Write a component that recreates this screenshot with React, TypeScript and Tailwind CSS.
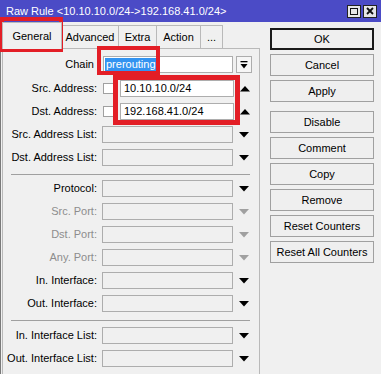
import React from 'react';

const DownArrow = ({ disabled = false }: { disabled?: boolean }) => (
  <svg width="10" height="6" viewBox="0 0 10 6" className="block">
    <polygon points="0,0 10,0 5,5.5" fill={disabled ? '#a0a0a0' : '#000'} />
  </svg>
);

const UpArrow = () => (
  <svg width="10" height="6" viewBox="0 0 10 6" className="block">
    <polygon points="0,5.5 10,5.5 5,0" fill="#000" />
  </svg>
);

function Label({ text, disabled = false, colon = true }: { text: string; disabled?: boolean; colon?: boolean }) {
  return (
    <div
      className={`w-[94px] shrink-0 text-right leading-none whitespace-nowrap ${colon ? '' : 'pr-[3px]'} ${
        disabled ? 'text-[#8d8d8d]' : 'text-black'
      }`}
    >
      {text}
      {colon ? ':' : ''}
    </div>
  );
}

function ListRow({ label, disabled = false }: { label: string; disabled?: boolean }) {
  return (
    <div className="flex items-center h-[17px]">
      <Label text={label} disabled={disabled} />
      <div className="ml-[5px] w-[131px] h-[17px] border border-[#adadad] bg-[#f0f0f0]" />
      <div className="ml-[6px] w-[10px]">
        <DownArrow disabled={disabled} />
      </div>
    </div>
  );
}

function AddressRow({ label, value }: { label: string; value: string }) {
  return (
    <div className="flex items-center h-[17px]">
      <Label text={label} />
      <div className="ml-[6px] w-[11px] h-[11px] border border-[#a0a0a0] bg-white" />
      <div className="ml-[6px] w-[114px] h-[17px] border border-[#adadad] bg-white flex items-center pl-[3px] text-black">
        {value}
      </div>
      <div className="ml-[6px] w-[10px]">
        <UpArrow />
      </div>
    </div>
  );
}

const Separator = () => <div className="ml-[8px] w-[239px] h-px bg-[#a0a0a0]" />;

const buttons = ['OK', 'Cancel', 'Apply', 'Disable', 'Comment', 'Copy', 'Remove', 'Reset Counters', 'Reset All Counters'];

export default function App() {
  return (
    <div className="relative w-[381px] h-[374px] overflow-hidden bg-[#f0f0f0] font-['Liberation_Sans',Arial,sans-serif] text-[11px]">
      {/* Title bar */}
      <div className="h-[22px] bg-[#4b4bc6] flex items-center pl-[6px] pr-[4px] text-white">
        <span className="flex-1 leading-none">Raw Rule &lt;10.10.10.0/24-&gt;192.168.41.0/24&gt;</span>
        <div className="flex gap-[2px]">
          <div className="w-[14px] h-[13px] bg-[#e6e6e6] border border-[#222] grid place-items-center">
            <div className="w-[8px] h-[7px] border border-[#111]" />
          </div>
          <div className="w-[14px] h-[13px] bg-[#e6e6e6] border border-[#222] grid place-items-center">
            <svg width="8" height="8" viewBox="0 0 8 8">
              <path d="M1 1 L7 7 M7 1 L1 7" stroke="#111" strokeWidth="1.8" />
            </svg>
          </div>
        </div>
      </div>

      {/* Body */}
      <div className="flex h-[352px] border-l border-[#7a7a7a]">
        {/* Left: tabs + panel */}
        <div className="ml-[1px] w-[258px] flex flex-col">
          <div className="h-[26px] flex items-end">
            <div className="relative z-10 -mb-px w-[60px] h-[27px] bg-[#f0f0f0] border border-b-0 border-[#b9b9b9] grid place-items-center text-black">
              General
            </div>
            <div className="w-[57px] h-[23px] border border-b-0 border-l-0 border-[#b9b9b9] grid place-items-center">Advanced</div>
            <div className="w-[38px] h-[23px] border border-b-0 border-l-0 border-[#b9b9b9] grid place-items-center">Extra</div>
            <div className="w-[44px] h-[23px] border border-b-0 border-l-0 border-[#b9b9b9] grid place-items-center">Action</div>
            <div className="w-[22px] h-[23px] border border-b-0 border-l-0 border-[#b9b9b9] grid place-items-center">...</div>
          </div>
          <div className="flex-1 border border-b-0 border-[#b9b9b9] pt-[7px] flex flex-col">
            {/* Chain */}
            <div className="flex items-center h-[17px]">
              <Label text="Chain" colon={false} />
              <div className="ml-[6px] w-[130px] h-[17px] border border-[#adadad] bg-white flex items-center pl-[1px]">
                <span className="bg-[#3393f0] text-white leading-[13px] px-px">prerouting</span>
              </div>
              <div className="ml-[3px] w-[16px] h-[17px] border border-[#adadad] bg-[#f6f6f6] grid place-items-center">
                <svg width="8" height="8" viewBox="0 0 8 8">
                  <rect x="0.5" y="0" width="7" height="1.3" fill="#000" />
                  <polygon points="0.5,3 7.5,3 4,7.5" fill="#000" />
                </svg>
              </div>
            </div>
            <div className="mt-[7px] flex flex-col gap-[6px]">
              <AddressRow label="Src. Address" value="10.10.10.0/24" />
              <AddressRow label="Dst. Address" value="192.168.41.0/24" />
              <ListRow label="Src. Address List" />
              <ListRow label="Dst. Address List" />
            </div>
            <div className="mt-[8px]">
              <Separator />
            </div>
            <div className="mt-[5px] flex flex-col gap-[6px]">
              <ListRow label="Protocol" />
              <ListRow label="Src. Port" disabled />
              <ListRow label="Dst. Port" disabled />
              <ListRow label="Any. Port" disabled />
              <ListRow label="In. Interface" />
              <ListRow label="Out. Interface" />
            </div>
            <div className="mt-[8px]">
              <Separator />
            </div>
            <div className="mt-[6px] flex flex-col gap-[6px]">
              <ListRow label="In. Interface List" />
              <ListRow label="Out. Interface List" />
            </div>
          </div>
        </div>

        {/* Right: buttons */}
        <div className="ml-[10px] pt-[6px] w-[104px] flex flex-col gap-[4px]">
          {buttons.map((b) => (
            <div
              key={b}
              className={`h-[22px] grid place-items-center bg-[#efefef] text-black leading-none ${
                b === 'OK' ? 'border-2 border-[#1a1a1a]' : 'border border-[#a0a0a0]'
              } ${b === 'Disable' ? 'mt-[5px]' : ''}`}
            >
              {b}
            </div>
          ))}
        </div>
      </div>

      {/* Red highlight boxes */}
      <div className="absolute left-0 top-[17px] w-[63px] h-[35px] border-4 border-[#e31e26]" />
      <div className="absolute left-[97px] top-[46px] w-[63px] h-[29px] border-4 border-[#e31e26]" />
      <div className="absolute left-[113px] top-[75px] w-[127px] h-[50px] border-[5px] border-[#e31e26]" />
    </div>
  );
}
